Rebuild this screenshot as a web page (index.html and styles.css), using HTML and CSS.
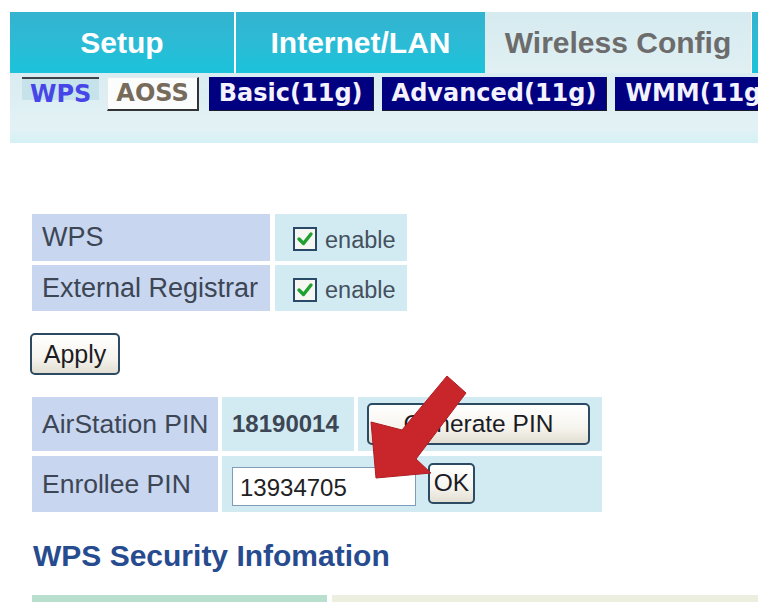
FILE: index.html
```html
<!DOCTYPE html>
<html lang="en">
<head>
<meta charset="utf-8">
<title>Wireless Config - WPS</title>
<link rel="stylesheet" href="styles.css">
</head>
<body>
<div class="page">
  <nav class="tabs">
    <div class="tab">Setup</div>
    <div class="tab gap">Internet/LAN</div>
    <div class="tab active">Wireless Config</div>
    <div class="tab stub"></div>
  </nav>
  <div class="band">
    <div class="subtabs">
      <span class="sub sel">WPS</span>
      <span class="sub aoss">AOSS</span>
      <span class="sub dark basic">Basic(11g)</span>
      <span class="sub dark">Advanced(11g)</span>
      <span class="sub dark">WMM(11g)</span>
    </div>
  </div>

  <main class="content">
    <div class="wps-grid">
      <div class="cell label">WPS</div>
      <div class="cell value"><span class="cb"><svg width="24" height="24" viewBox="0 0 24 24"><rect x="1" y="1" width="22" height="22" fill="#f6f6f2" stroke="#284a66" stroke-width="2"/><path d="M6 12 L10.5 16.5 L18 7" fill="none" stroke="#20a030" stroke-width="3.4" stroke-linecap="round" stroke-linejoin="round"/></svg></span><span class="en">enable</span></div>
      <div class="cell label">External Registrar</div>
      <div class="cell value"><span class="cb"><svg width="24" height="24" viewBox="0 0 24 24"><rect x="1" y="1" width="22" height="22" fill="#f6f6f2" stroke="#284a66" stroke-width="2"/><path d="M6 12 L10.5 16.5 L18 7" fill="none" stroke="#20a030" stroke-width="3.4" stroke-linecap="round" stroke-linejoin="round"/></svg></span><span class="en">enable</span></div>
    </div>

    <button class="btn apply">Apply</button>

    <div class="pin-grid">
      <div class="cell label">AirStation PIN</div>
      <div class="cell value pin">18190014</div>
      <div class="cell value gen"><button class="btn genbtn">Generate PIN</button></div>
      <div class="cell label">Enrollee PIN</div>
      <div class="cell value enroll"><input class="pin-input" type="text" value="13934705"><button class="btn okbtn">OK</button></div>
    </div>

    <h2 class="heading">WPS Security Infomation</h2>

    <div class="bars">
      <div class="bar green"></div>
      <div class="bar beige"></div>
    </div>
  </main>

  <svg class="arrow" width="765" height="607" viewBox="0 0 765 607">
    <polygon points="447,376 466,393 416,459 431,473 376,478 371,422 402,430" fill="#c8262b" stroke="#b01e24" stroke-width="1"/>
  </svg>
</div>
</body>
</html>
```

FILE: styles.css
```css
* { box-sizing: border-box; }

html, body {
  margin: 0;
  padding: 0;
  background: #ffffff;
}

body {
  font-family: "Liberation Sans", Arial, sans-serif;
  color: #3d4654;
}

.page {
  position: relative;
  width: 765px;
  height: 607px;
  overflow: hidden;
}

/* ---------- top tabs ---------- */
.tabs {
  display: flex;
  width: 748px;
  height: 61px;
  margin: 12px 0 0 10px;
}

.tab {
  height: 61px;
  display: flex;
  align-items: center;
  justify-content: center;
  font-weight: bold;
  font-size: 30px;
  color: #ffffff;
  background: linear-gradient(to bottom, #33b3cf 0%, #2dbad5 45%, #1bc3db 100%);
  flex: 0 0 auto;
}

.tab:nth-child(1) { width: 224px; }
.tab.gap { width: 249px; margin-left: 2px; }
.tab.active {
  width: 266px;
  color: #6c6c6c;
  background: linear-gradient(to bottom, #d6ebf0 0%, #e0f0f3 100%);
}
.tab.stub { width: 6px; margin-left: 1px; }

/* ---------- sub tabs band ---------- */
.band {
  width: 748px;
  height: 70px;
  margin-left: 10px;
  padding: 4px 0 0 12px;
  overflow: hidden;
  background: linear-gradient(to bottom, #d9ecf1 0%, #e3f2f5 80%, #d4f1f5 100%);
}

.subtabs {
  display: flex;
  align-items: flex-start;
  white-space: nowrap;
}

.sub {
  display: block;
  flex: 0 0 auto;
  height: 34px;
  line-height: 33px;
  font-family: "DejaVu Sans", Verdana, sans-serif;
  font-weight: bold;
  font-size: 24px;
  padding: 0 10px;
}

.sub.sel {
  padding: 0 8px;
  line-height: 31px;
  color: #4646e8;
  border-top: 2px solid #404448;
  background: linear-gradient(#c6e3ec, #c6e3ec) no-repeat;
  background-size: 100% 21px;
}

.sub.aoss {
  margin-left: 8px;
  padding: 0 8px;
  color: #776b5c;
  background: #fbfdfd;
  border-left: 1px solid #e6eaea;
  border-top: 1px solid #e6eaea;
  border-right: 2px solid #333;
  border-bottom: 2px solid #333;
  line-height: 30px;
}

.sub.dark {
  margin-left: 8px;
  color: #f4f2ff;
  background: #000080;
  border-right: 1px solid #1a1a2a;
  border-bottom: 1px solid #1a1a2a;
  line-height: 32px;
}

.sub.dark.basic { margin-left: 10px; }

/* ---------- content ---------- */
.content {
  padding: 71px 0 0 30px;
}

.cell {
  display: flex;
  align-items: center;
  font-size: 26.5px;
  color: #3d4654;
}

.cell.label {
  background: #c8d6f0;
  padding-left: 10px;
}

.cell.value {
  background: #d2ebf3;
}

.wps-grid {
  display: grid;
  grid-template-columns: 238px 132px;
  grid-template-rows: 47px 46px;
  column-gap: 5px;
  row-gap: 4px;
  margin-left: 2px;
}

.wps-grid .label { font-size: 27px; }

.wps-grid .value {
  padding-left: 18px;
}

.cb {
  display: block;
  width: 24px;
  height: 24px;
  margin-top: 3px;
}

.cb svg { display: block; }

.en {
  font-size: 23.5px;
  margin-left: 8px;
  margin-top: 5px;
  color: #45505e;
}

.btn {
  font-family: "Liberation Sans", Arial, sans-serif;
  color: #1c1c24;
  border: 2px solid #2c4b63;
  border-radius: 5px;
  background: linear-gradient(to bottom, #ffffff 0%, #f6f4ee 60%, #e2ded2 100%);
  padding: 0;
  cursor: pointer;
}

.apply {
  display: block;
  width: 90px;
  height: 42px;
  margin-top: 22px;
  font-size: 25px;
}

.pin-grid {
  display: grid;
  grid-template-columns: 186px 132px 244px;
  grid-template-rows: 54px 56px;
  column-gap: 4px;
  row-gap: 5px;
  margin: 22px 0 0 2px;
}

.pin {
  font-weight: bold;
  font-size: 24px;
  padding-left: 10px;
  color: #3d4654;
}

.gen { padding-left: 9px; }

.genbtn {
  width: 223px;
  height: 42px;
  font-size: 24.5px;
}

.enroll {
  grid-column: 2 / 4;
  padding-left: 10px;
}

.pin-input {
  width: 184px;
  height: 39px;
  margin-top: 4px;
  border: 1px solid #7f9db9;
  background: #ffffff;
  font-family: "Liberation Sans", Arial, sans-serif;
  font-size: 24px;
  color: #222;
  padding: 4px 0 0 7px;
}

.okbtn {
  width: 47px;
  height: 41px;
  margin-left: 12px;
  margin-top: -2px;
  font-size: 24.5px;
}

.heading {
  margin: 27px 0 0 3px;
  font-size: 30px;
  font-weight: bold;
  color: #274b8f;
  line-height: 34px;
}

.bars {
  display: flex;
  margin: 22px 0 0 2px;
  gap: 5px;
}

.bar { height: 7px; }
.bar.green { width: 295px; background: #b9dfcf; }
.bar.beige { width: 426px; background: #eceee0; }

/* ---------- annotation arrow ---------- */
.arrow {
  position: absolute;
  left: 0;
  top: 0;
  pointer-events: none;
}
```
